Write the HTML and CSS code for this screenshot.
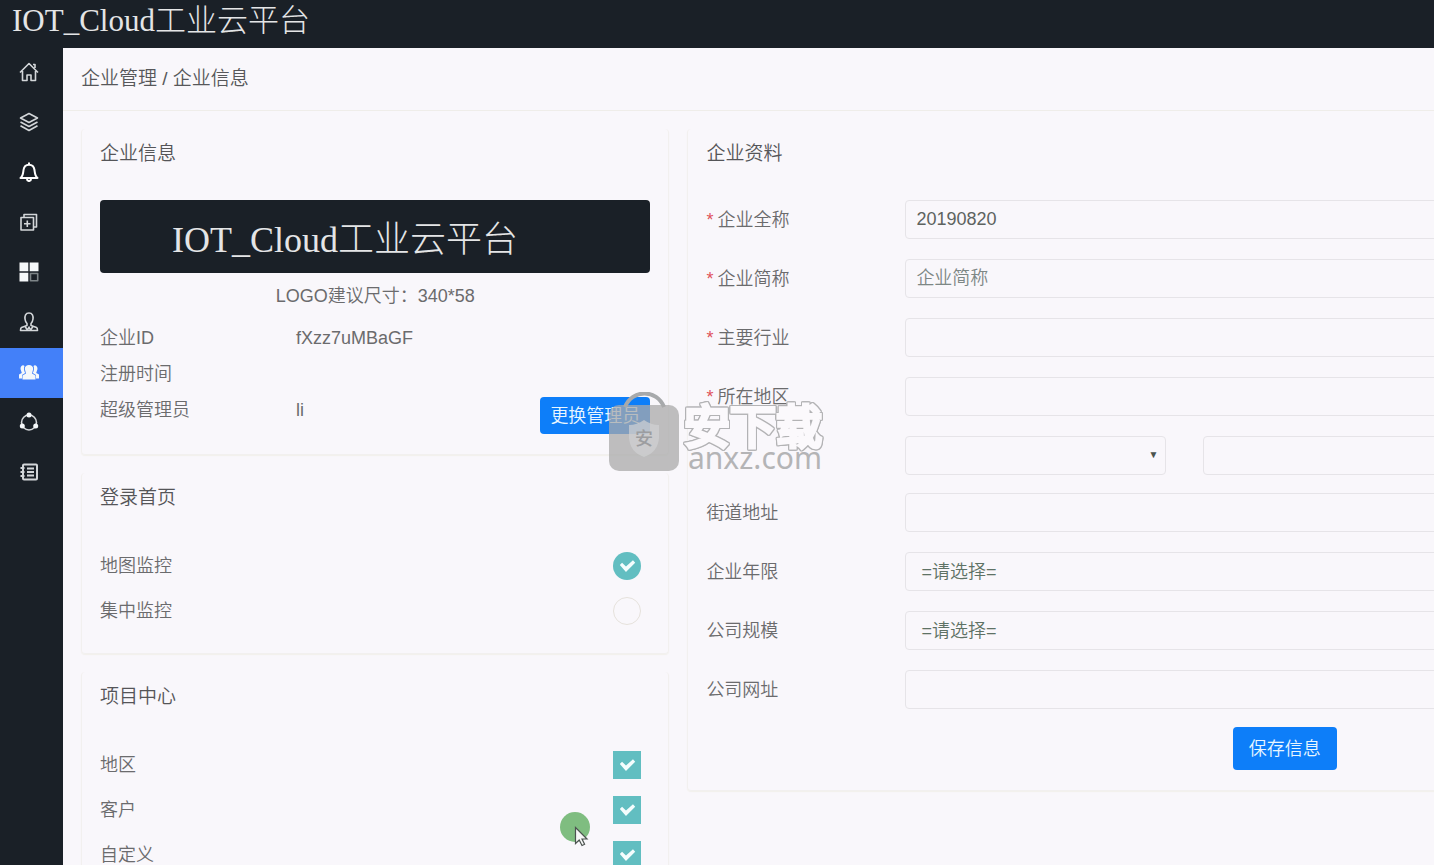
FILE: index.html
```html
<!DOCTYPE html>
<html lang="zh-CN">
<head>
<meta charset="utf-8">
<title>IOT_Cloud工业云平台</title>
<link rel="stylesheet" href="styles.css">
</head>
<body>
<header class="header">IOT_Cloud工业云平台</header>
<div class="shell">
  <nav class="sidebar" aria-label="主导航">
    <a class="nav" href="#" aria-label="首页"><svg viewBox="0 0 20 20"><path d="M1 10.500L10 1.500L19 10.500M3.500 9V18.500H8V13H12V18.500H16.500V9M14 2.500H16V6"/></svg></a>
    <a class="nav" href="#" aria-label="项目"><svg viewBox="0 0 20 20"><path d="M10 1.500L18.500 6L10 10.500L1.500 6ZM1.500 10L10 14.500L18.500 10M1.500 13.800L10 18.500L18.500 13.800"/></svg></a>
    <a class="nav" href="#" aria-label="报警"><svg class="bright" viewBox="0 0 20 20"><path d="M1.500 16C4 14 4 12 4.500 8C5 4.500 7 2.700 10 2.700S15 4.500 15.500 8C16 12 16 14 18.500 16ZM10 .5V2.500M8 17C8 19.700 12 19.700 12 17"/></svg></a>
    <a class="nav" href="#" aria-label="新增"><svg viewBox="0 0 20 20"><path d="M2 5.500H14.500V18H2ZM5 5V2.500H17.500V15H15M8.300 8.500V15M5 11.800H11.500"/></svg></a>
    <a class="nav" href="#" aria-label="组态"><svg viewBox="0 0 20 20"><path class="solid" d="M.5.500H9.300V9.300H.5ZM10.700.500H19.500V9.300H10.700ZM.5 10.700H9.300V19.500H.5Z"/><path class="dim" d="M11.500 11.500H18.700V18.700H11.500Z"/></svg></a>
    <a class="nav" href="#" aria-label="用户"><svg viewBox="0 0 20 20"><path d="M10 1C6.500 1 5.700 4 6 7C6.200 9 7 10.500 8 11.500V13.500L2.500 15.500Q1.500 16 1.500 18.500H18.500Q18.500 16 17.500 15.500L12 13.500V11.500C13 10.500 13.800 9 14 7C14.300 4 13.500 1 10 1ZM6 14.500L8.500 18L10 15L11.500 18L14 14.500"/></svg></a>
    <a class="nav active" href="#" aria-label="企业"><svg viewBox="0 0 20 20"><path class="solid" d="M5.800 7C5.500 1.500 14.500 1.500 14.200 7L13 11.500L16.500 13.500V17.500H3.500V13.500L7 11.500ZM1.500 7C1.500 3 4.500 2.500 5.500 4C4.500 6.500 5 8.500 6.200 11L3 13V16.500H0V12.500L2.800 11ZM18.500 7C18.500 3 15.500 2.500 14.500 4C15.500 6.500 15 8.500 13.800 11L17 13V16.500H20V12.500L17.200 11Z"/></svg></a>
    <a class="nav" href="#" aria-label="共享"><svg viewBox="0 0 20 20"><circle cx="10" cy="10.500" r="7.500"/><circle class="solid" cx="10" cy="3" r="2.500"/><circle class="solid" cx="3.300" cy="14" r="2.500"/><circle class="solid" cx="16.700" cy="14" r="2.500"/></svg></a>
    <a class="nav" href="#" aria-label="日志"><svg class="heavy" viewBox="0 0 20 20"><rect x="4" y="2.500" width="14" height="15" rx="1"/><path d="M8 6.500H15M8 10H15M8 13.500H15M1.500 6H5.500M1.500 10H5.500M1.500 14H5.500"/></svg></a>
  </nav>
  <main class="main">
    <div class="crumb">企业管理 / 企业信息</div>
    <div class="columns">
      <div class="stack">
        <section class="card">
          <h2 class="title">企业信息</h2>
          <div class="logo">IOT_Cloud工业云平台</div>
          <p class="hint">LOGO建议尺寸：340*58</p>
          <div class="info"><span class="key">企业ID</span><span class="value">fXzz7uMBaGF</span></div>
          <div class="info"><span class="key">注册时间</span></div>
          <div class="info"><span class="key">超级管理员</span><span class="value">li</span><button class="btn change" type="button">更换管理员</button></div>
        </section>
        <section class="card">
          <h2 class="title">登录首页</h2>
          <label class="option">地图监控<input class="tick round" type="radio" name="home" checked></label>
          <label class="option">集中监控<input class="tick round" type="radio" name="home"></label>
        </section>
        <section class="card">
          <h2 class="title">项目中心</h2>
          <label class="option">地区<input class="tick" type="checkbox" checked></label>
          <label class="option">客户<input class="tick" type="checkbox" checked></label>
          <label class="option">自定义<input class="tick" type="checkbox" checked></label>
        </section>
      </div>
      <form class="card profile">
        <h2 class="title">企业资料</h2>
        <div class="groups">
          <div class="group">
            <div class="row"><label class="required" for="full">企业全称</label><input class="field" id="full" type="text" value="20190820"></div>
            <div class="row"><label class="required" for="short">企业简称</label><input class="field" id="short" type="text" placeholder="企业简称"></div>
            <div class="row"><label class="required" for="trade">主要行业</label><select class="field" id="trade"><option></option></select></div>
            <div class="row"><label class="required" for="area">所在地区</label><select class="field" id="area"><option></option></select></div>
            <div class="row"><span></span><div class="pair"><span class="picker"><select class="field" aria-label="省"><option></option></select></span><span class="picker"><select class="field" aria-label="市"><option></option></select></span></div></div>
          </div>
          <div class="group">
            <div class="row"><label for="street">街道地址</label><input class="field" id="street" type="text"></div>
            <div class="row"><label for="years">企业年限</label><select class="field choice" id="years"><option>=请选择=</option></select></div>
            <div class="row"><label for="scale">公司规模</label><select class="field choice" id="scale"><option>=请选择=</option></select></div>
            <div class="row"><label for="site">公司网址</label><input class="field" id="site" type="text"></div>
          </div>
        </div>
        <button class="btn save" type="button">保存信息</button>
      </form>
    </div>
  </main>
</div>
<div class="watermark">
  <svg class="bag" viewBox="0 0 70 80"><path class="handle" d="M16 15C23-3 48-3 55 15"/><rect class="body" y="13" width="70" height="66" rx="10"/><path class="shield" d="M35 28Q42 33 50 33V46Q49 60 35 65Q21 60 20 46V33Q28 33 35 28Z"/><text class="mark" x="35" y="53" text-anchor="middle">安</text></svg>
  <div class="brand"><span class="brand-name">安下载</span><span class="brand-site">anxz.com</span></div>
</div>
<svg class="pointer" viewBox="0 0 32 36"><circle cx="15" cy="15" r="15"/><path d="M15.500 15.500V31.500L19.200 28L22 33.500L24.600 32.200L22 27H27Z"/></svg>
</body>
</html>
```
FILE: styles.css
```css
* { box-sizing: border-box; }

body {
  margin: 0;
  height: 100vh;
  overflow: hidden;
  background: #f9f7fb;
  color: #6b6b6d;
  font-family: "Liberation Sans", "Noto Sans CJK SC", sans-serif;
  font-size: 18px;
  font-weight: 350;
  line-height: 24px;
}

.header {
  height: 48px;
  padding: 0 12px;
  background: #1a2027;
  color: #e4e5e6;
  font-family: "Liberation Serif", "Noto Sans CJK SC", serif;
  font-size: 31px;
  font-weight: 300;
  line-height: 41px;
}

.shell { display: flex; min-height: calc(100vh - 48px); }

.sidebar { flex: 0 0 63px; background: #1a2027; }
.nav { display: flex; align-items: center; height: 50px; padding: 0 0 2px 19px; }
.nav.active { background: #4380f9; }
.nav svg {
  width: 20px;
  height: 20px;
  fill: none;
  stroke: #d3d6d9;
  stroke-width: 1.6;
  stroke-linejoin: round;
}
.nav .bright { stroke: #fff; stroke-width: 2; }
.nav .heavy { stroke-width: 2; }
.nav .solid { fill: #f5f8fa; stroke: none; }
.nav .dim { stroke: #7d8487; }

.main { flex: 1; min-width: 1837px; }
.crumb {
  height: 63px;
  padding: 19px 18px;
  border-bottom: 1px solid #efede9;
  color: #57575a;
  font-size: 19px;
}
.columns {
  display: grid;
  grid-template-columns: 33fr 67fr;
  gap: 18px;
  align-items: start;
  padding: 18px;
}
.stack { display: grid; gap: 18px; }

.card {
  padding: 13px 18px 20px;
  border: solid #f2f0ef;
  border-width: 0 1px 1px;
  border-radius: 4px;
  box-shadow: 0 1px 1px #f2f0ec;
}
.title { margin: 0 0 34px; color: #555558; font-size: 19px; font-weight: inherit; }
.stack .title { margin-bottom: 33px; }

.logo {
  height: 73px;
  margin-top: 34px;
  padding-left: 72px;
  border-radius: 4px;
  background: #1a2027;
  color: #e4e5e6;
  font-family: "Liberation Serif", "Noto Sans CJK SC", serif;
  font-size: 36px;
  font-weight: 300;
  line-height: 80px;
}
.hint { margin: 11px 0 12px; text-align: center; }
.info { display: flex; align-items: flex-start; line-height: 36px; }
.key { flex: 0 0 196px; }
.btn {
  border: 0;
  border-radius: 4px;
  background: #0d7ef9;
  color: #e8f6ff;
  font: inherit;
}
.change { height: 37px; margin: 5px 0 0 auto; padding: 0 10px; }

.option { display: flex; align-items: center; justify-content: space-between; height: 45px; padding-right: 9px; }
.tick { appearance: none; width: 28px; height: 28px; margin: 0; border: 1px solid #e6e2dc; }
.round { border-radius: 50%; }
.tick:checked { border: 0; background: #62bec1; }
.tick:checked::before {
  content: "";
  display: block;
  height: 28px;
  background: #f4fdfd;
  clip-path: polygon(23% 48%, 31% 40%, 45% 54%, 70% 31%, 78% 40%, 45% 73%);
}

.groups { display: grid; gap: 18px; }
.group { display: grid; gap: 20px; }
.row { display: grid; grid-template-columns: 199px 1fr; align-items: center; }
.required::before { content: "*"; margin-right: 4px; color: #e0525c; }
.field {
  appearance: none;
  width: 100%;
  height: 39px;
  padding: 0 10px;
  border: 1px solid #e6e4e8;
  border-radius: 4px;
  background: transparent;
  color: #5d6360;
  font: inherit;
}
.field::placeholder { color: #7d8785; opacity: 1; }
.choice { padding-left: 15px; color: #5e7265; }
.pair { display: flex; gap: 37px; }
.picker { position: relative; flex: 0 0 261px; }
.picker::after {
  content: "▼";
  position: absolute;
  top: 7px;
  right: 8px;
  color: #4b534e;
  font-size: 10px;
  pointer-events: none;
}
.save { display: block; height: 43px; margin: 18px auto 0; padding: 0 16px; }

.watermark { position: absolute; top: 392px; left: 609px; display: flex; gap: 5px; pointer-events: none; }
.bag { width: 70px; height: 80px; }
.handle { fill: none; stroke: #a7a9ab; stroke-width: 4; }
.body { fill: #aaa; opacity: .75; }
.shield { fill: #d0d1d3; opacity: .7; }
.mark { fill: #9c9da0; font-size: 18px; font-weight: 500; }
.brand { display: flex; flex-direction: column; padding-top: 12px; }
.brand-name {
  color: #fbf9fc;
  font-size: 46px;
  font-weight: 400;
  line-height: 46px;
  -webkit-text-stroke: 4px #fbf9fc;
  filter: drop-shadow(1px 0 #b3b3b5) drop-shadow(-1px 0 #b3b3b5) drop-shadow(0 1px #b3b3b5) drop-shadow(0 -1px #b3b3b5);
}
.brand-site { padding-left: 4px; color: #b4b4b6; font-family: "Noto Sans", sans-serif; font-size: 30px; font-weight: 400; line-height: 16px; }

.pointer { position: absolute; top: 812px; left: 560px; width: 32px; height: 36px; pointer-events: none; }
.pointer circle { fill: #7fbd80; }
.pointer path { fill: #f7f7f7; stroke: #4c5350; stroke-width: 1.2; }
```
